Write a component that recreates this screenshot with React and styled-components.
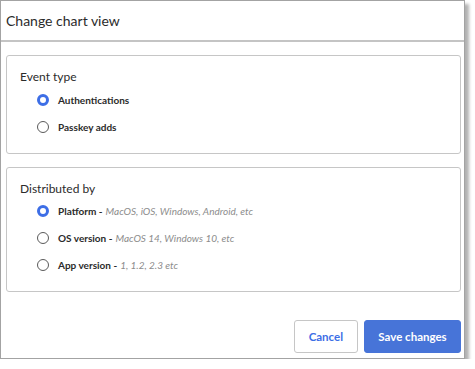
import styled, { createGlobalStyle } from "styled-components";

const GlobalStyle = createGlobalStyle`
  body {
    margin: 0;
    background: #ffffff;
    font-family: Lato, "Liberation Sans", sans-serif;
  }
`;

const eventTypes = [
  { label: "Authentications", checked: true },
  { label: "Passkey adds" },
];

const distributions = [
  { label: "Platform", hint: "MacOS, iOS, Windows, Android, etc", checked: true },
  { label: "OS version", hint: "MacOS 14, Windows 10, etc" },
  { label: "App version", hint: "1, 1.2, 2.3 etc" },
];

const Dialog = styled.section`
  display: flex;
  flex-direction: column;
  width: 465px;
  height: 359px;
  box-sizing: border-box;
  background: #ffffff;
  border: 1px solid #a3a3a3;
  box-shadow: 4px 4px 3px rgba(0, 0, 0, 0.3);
`;

const Header = styled.header`
  display: flex;
  align-items: center;
  height: 39px;
  padding: 0 5px;
  border-bottom: 2px solid #c4c4c4;

  h2 {
    margin: 0;
    color: #2b2b2b;
    font-size: 14px;
    font-weight: 400;
  }
`;

const Body = styled.div`
  display: grid;
  gap: 13px;
  padding: 13px 3px 0 5px;
`;

const Card = styled.fieldset`
  margin: 0;
  padding: 12px 13px 17px;
  border: 1px solid #c6c6c6;
  border-radius: 3px;
  min-inline-size: 0;
`;

const Legend = styled.div`
  color: #2b2b2b;
  font-size: 12px;
  line-height: 18px;
  margin-bottom: 4.5px;
`;

const Options = styled.div`
  display: grid;
  gap: 9px;
  padding-left: 17px;
`;

const Option = styled.label`
  display: flex;
  align-items: center;
  gap: 9px;
  height: 18px;
  color: #2b2b2b;
  font-size: 10px;
  font-weight: 700;
`;

const Radio = styled.span`
  box-sizing: border-box;
  width: 12px;
  height: 12px;
  border-radius: 50%;
  border: ${({ $checked }) => ($checked ? "3.5px solid #3d6ee6" : "1px solid #5a5a5a")};
  background: #ffffff;
  flex-shrink: 0;
`;

const Hint = styled.span`
  color: #8c8c8c;
  font-style: italic;
  font-weight: 400;
  margin-left: 3px;
`;

const Footer = styled.footer`
  display: flex;
  justify-content: flex-end;
  gap: 6px;
  margin-top: auto;
  padding: 0 3px 5px 0;
`;

const Button = styled.button`
  height: 33px;
  padding: 0 ${({ $primary }) => ($primary ? "13px" : "14px")};
  min-width: ${({ $primary }) => ($primary ? "97px" : "63px")};
  font: inherit;
  font-size: 11.5px;
  font-weight: 700;
  border-radius: 3px;
  cursor: pointer;
  color: ${({ $primary }) => ($primary ? "#ffffff" : "#3d6ee6")};
  background: ${({ $primary }) => ($primary ? "#4774d8" : "#ffffff")};
  border: 1px solid ${({ $primary }) => ($primary ? "#4774d8" : "#c6c6c6")};
`;

export default function App() {
  return (
    <>
      <GlobalStyle />
      <Dialog>
        <Header>
          <h2>Change chart view</h2>
        </Header>
        <Body>
          <Card>
            <Legend>Event type</Legend>
            <Options>
              {eventTypes.map((item) => (
                <Option key={item.label}>
                  <Radio $checked={item.checked} />
                  {item.label}
                </Option>
              ))}
            </Options>
          </Card>
          <Card>
            <Legend>Distributed by</Legend>
            <Options>
              {distributions.map((item) => (
                <Option key={item.label}>
                  <Radio $checked={item.checked} />
                  <span>
                    {item.label} -<Hint>{item.hint}</Hint>
                  </span>
                </Option>
              ))}
            </Options>
          </Card>
        </Body>
        <Footer>
          <Button>Cancel</Button>
          <Button $primary>Save changes</Button>
        </Footer>
      </Dialog>
    </>
  );
}
